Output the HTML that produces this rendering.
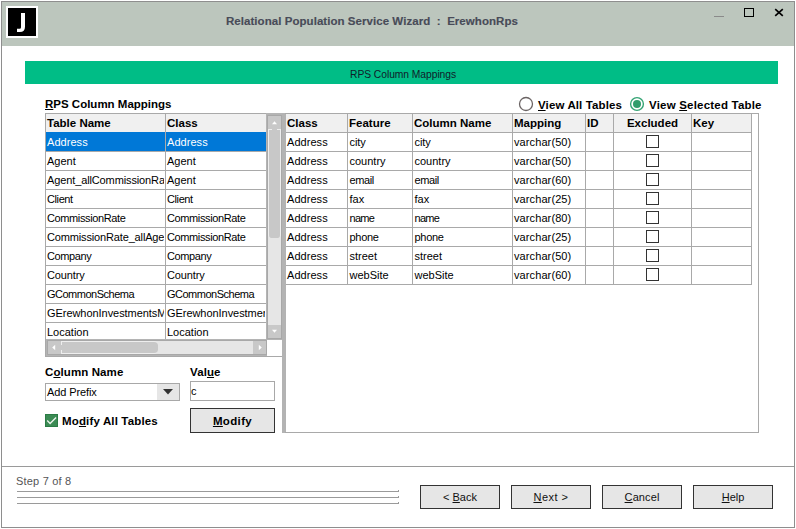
<!DOCTYPE html><html><head><meta charset="utf-8"><style>
*{margin:0;padding:0;box-sizing:border-box}
html,body{width:796px;height:529px;overflow:hidden;background:#fff}
body{position:relative;font-family:"Liberation Sans",sans-serif;font-size:11px;color:#000}
.a{position:absolute;white-space:nowrap}
.u{text-decoration:underline;text-underline-offset:1px}
.clip{position:absolute;overflow:hidden}
</style></head><body>
<div class="a" style="left:1px;top:1px;width:794px;height:527px;border:1px solid #8e8e8e"></div>
<div class="a" style="left:2px;top:2px;width:792px;height:44px;background:#bcc6bd"></div>
<div class="a" style="left:6px;top:6px;width:32px;height:32px;background:#fff"></div>
<div class="a" style="left:8px;top:8px;width:28px;height:28px;background:#000"></div>
<svg class="a" style="left:8px;top:8px" width="28" height="28" viewBox="8 8 28 28"><path d="M21 13H25V26.8Q25 32 19.8 32H17V28.8H19.6Q21 28.8 21 27.2Z" fill="#fff"/></svg>
<div class="a" style="left:226px;top:10.62px;line-height:20px;font-size:11.5px;letter-spacing:0.05px;font-weight:bold;color:#484b58;-webkit-text-stroke:0.15px #484b58">Relational Population Service Wizard&nbsp;&nbsp;:&nbsp;&nbsp;ErewhonRps</div>
<div class="a" style="left:714px;top:16px;width:10px;height:1px;background:#8a8a8a"></div>
<div class="a" style="left:744px;top:8px;width:10px;height:9px;border:1.5px solid #000"></div>
<svg class="a" style="left:774px;top:8px" width="10" height="9" viewBox="0 0 10 9"><path d="M1.2 1.2L8.8 7.8M8.8 1.2L1.2 7.8" stroke="#000" stroke-width="1.7"/></svg>
<div class="a" style="left:25px;top:61px;width:753px;height:23px;background:#00bd86"></div>
<div class="a" style="left:350px;top:64.83px;line-height:20px;font-size:10.3px;letter-spacing:-0.05px;font-weight:normal;color:#10202a;">RPS Column Mappings</div>
<div class="a" style="left:45px;top:93.52px;line-height:20px;font-size:11.5px;letter-spacing:0px;font-weight:bold;color:#000;"><span class="u">R</span>PS Column Mappings</div>
<svg class="a" style="left:518px;top:96px" width="16" height="16" viewBox="0 0 16 16"><circle cx="8" cy="8" r="6.5" fill="#fff" stroke="#6b6464" stroke-width="1.3"/></svg>
<div class="a" style="left:538px;top:95.02px;line-height:20px;font-size:11.5px;letter-spacing:0.12px;font-weight:bold;color:#000;"><span class="u">V</span>iew All Tables</div>
<svg class="a" style="left:629px;top:96px" width="16" height="16" viewBox="0 0 16 16"><circle cx="8" cy="8" r="6.4" fill="#fff" stroke="#34a474" stroke-width="1.4"/><circle cx="8" cy="8" r="4" fill="#2f9c6b"/></svg>
<div class="a" style="left:649px;top:95.02px;line-height:20px;font-size:11.5px;letter-spacing:0.2px;font-weight:bold;color:#000;">View <span class="u">S</span>elected Table</div>
<div class="a" style="left:45px;top:113px;width:237px;height:244px;border:1px solid #a9a9a9;border-right:none;background:#fff"></div>
<div class="a" style="left:46px;top:114px;width:220px;height:18px;background:#f0f0f0"></div>
<div class="a" style="left:46px;top:132px;width:220px;height:1px;background:#a9a9a9"></div>
<div class="a" style="left:165px;top:114px;width:1px;height:226px;background:#a9a9a9"></div>
<div class="a" style="left:47px;top:113.22px;line-height:20px;font-size:11.5px;letter-spacing:0px;font-weight:bold;color:#000;">Table Name</div>
<div class="a" style="left:167px;top:113.22px;line-height:20px;font-size:11.5px;letter-spacing:0px;font-weight:bold;color:#000;">Class</div>
<div class="a" style="left:46px;top:132px;width:220px;height:19px;background:#0078d7"></div>
<div class="clip" style="left:46px;top:133px;width:118px;height:18px">
<div class="a" style="left:1px;top:-0.91px;line-height:20px;font-size:11px;letter-spacing:0.05px;font-weight:normal;color:#fff;">Address</div>
</div>
<div class="clip" style="left:166px;top:133px;width:99px;height:18px">
<div class="a" style="left:1px;top:-0.91px;line-height:20px;font-size:11px;letter-spacing:0.05px;font-weight:normal;color:#fff;">Address</div>
</div>
<div class="a" style="left:46px;top:151px;width:220px;height:1px;background:#a9a9a9"></div>
<div class="clip" style="left:46px;top:152px;width:118px;height:18px">
<div class="a" style="left:1px;top:-0.91px;line-height:20px;font-size:11px;letter-spacing:0.0px;font-weight:normal;color:#000;">Agent</div>
</div>
<div class="clip" style="left:166px;top:152px;width:99px;height:18px">
<div class="a" style="left:1px;top:-0.91px;line-height:20px;font-size:11px;letter-spacing:0.0px;font-weight:normal;color:#000;">Agent</div>
</div>
<div class="a" style="left:46px;top:170px;width:220px;height:1px;background:#a9a9a9"></div>
<div class="clip" style="left:46px;top:171px;width:118px;height:18px">
<div class="a" style="left:1px;top:-0.91px;line-height:20px;font-size:11px;letter-spacing:-0.12px;font-weight:normal;color:#000;">Agent_allCommissionRates</div>
</div>
<div class="clip" style="left:166px;top:171px;width:99px;height:18px">
<div class="a" style="left:1px;top:-0.91px;line-height:20px;font-size:11px;letter-spacing:0.0px;font-weight:normal;color:#000;">Agent</div>
</div>
<div class="a" style="left:46px;top:189px;width:220px;height:1px;background:#a9a9a9"></div>
<div class="clip" style="left:46px;top:190px;width:118px;height:18px">
<div class="a" style="left:1px;top:-0.91px;line-height:20px;font-size:11px;letter-spacing:-0.4px;font-weight:normal;color:#000;">Client</div>
</div>
<div class="clip" style="left:166px;top:190px;width:99px;height:18px">
<div class="a" style="left:1px;top:-0.91px;line-height:20px;font-size:11px;letter-spacing:-0.4px;font-weight:normal;color:#000;">Client</div>
</div>
<div class="a" style="left:46px;top:208px;width:220px;height:1px;background:#a9a9a9"></div>
<div class="clip" style="left:46px;top:209px;width:118px;height:18px">
<div class="a" style="left:1px;top:-0.91px;line-height:20px;font-size:11px;letter-spacing:-0.38px;font-weight:normal;color:#000;">CommissionRate</div>
</div>
<div class="clip" style="left:166px;top:209px;width:99px;height:18px">
<div class="a" style="left:1px;top:-0.91px;line-height:20px;font-size:11px;letter-spacing:-0.38px;font-weight:normal;color:#000;">CommissionRate</div>
</div>
<div class="a" style="left:46px;top:227px;width:220px;height:1px;background:#a9a9a9"></div>
<div class="clip" style="left:46px;top:228px;width:118px;height:18px">
<div class="a" style="left:1px;top:-0.91px;line-height:20px;font-size:11px;letter-spacing:-0.15px;font-weight:normal;color:#000;">CommissionRate_allAgents</div>
</div>
<div class="clip" style="left:166px;top:228px;width:99px;height:18px">
<div class="a" style="left:1px;top:-0.91px;line-height:20px;font-size:11px;letter-spacing:-0.38px;font-weight:normal;color:#000;">CommissionRate</div>
</div>
<div class="a" style="left:46px;top:246px;width:220px;height:1px;background:#a9a9a9"></div>
<div class="clip" style="left:46px;top:247px;width:118px;height:18px">
<div class="a" style="left:1px;top:-0.91px;line-height:20px;font-size:11px;letter-spacing:-0.38px;font-weight:normal;color:#000;">Company</div>
</div>
<div class="clip" style="left:166px;top:247px;width:99px;height:18px">
<div class="a" style="left:1px;top:-0.91px;line-height:20px;font-size:11px;letter-spacing:-0.38px;font-weight:normal;color:#000;">Company</div>
</div>
<div class="a" style="left:46px;top:265px;width:220px;height:1px;background:#a9a9a9"></div>
<div class="clip" style="left:46px;top:266px;width:118px;height:18px">
<div class="a" style="left:1px;top:-0.91px;line-height:20px;font-size:11px;letter-spacing:-0.12px;font-weight:normal;color:#000;">Country</div>
</div>
<div class="clip" style="left:166px;top:266px;width:99px;height:18px">
<div class="a" style="left:1px;top:-0.91px;line-height:20px;font-size:11px;letter-spacing:-0.12px;font-weight:normal;color:#000;">Country</div>
</div>
<div class="a" style="left:46px;top:284px;width:220px;height:1px;background:#a9a9a9"></div>
<div class="clip" style="left:46px;top:285px;width:118px;height:18px">
<div class="a" style="left:1px;top:-0.91px;line-height:20px;font-size:11px;letter-spacing:-0.5px;font-weight:normal;color:#000;">GCommonSchema</div>
</div>
<div class="clip" style="left:166px;top:285px;width:99px;height:18px">
<div class="a" style="left:1px;top:-0.91px;line-height:20px;font-size:11px;letter-spacing:-0.5px;font-weight:normal;color:#000;">GCommonSchema</div>
</div>
<div class="a" style="left:46px;top:303px;width:220px;height:1px;background:#a9a9a9"></div>
<div class="clip" style="left:46px;top:304px;width:118px;height:18px">
<div class="a" style="left:1px;top:-0.91px;line-height:20px;font-size:11px;letter-spacing:-0.05px;font-weight:normal;color:#000;">GErewhonInvestmentsModel</div>
</div>
<div class="clip" style="left:166px;top:304px;width:99px;height:18px">
<div class="a" style="left:1px;top:-0.91px;line-height:20px;font-size:11px;letter-spacing:-0.05px;font-weight:normal;color:#000;">GErewhonInvestmentsModel</div>
</div>
<div class="a" style="left:46px;top:322px;width:220px;height:1px;background:#a9a9a9"></div>
<div class="clip" style="left:46px;top:323px;width:118px;height:16px">
<div class="a" style="left:1px;top:-0.91px;line-height:20px;font-size:11px;letter-spacing:0.0px;font-weight:normal;color:#000;">Location</div>
</div>
<div class="clip" style="left:166px;top:323px;width:99px;height:16px">
<div class="a" style="left:1px;top:-0.91px;line-height:20px;font-size:11px;letter-spacing:0.0px;font-weight:normal;color:#000;">Location</div>
</div>
<div class="a" style="left:165px;top:132px;width:1px;height:19px;background:#a9a9a9"></div>
<div class="a" style="left:266px;top:113px;width:16px;height:227px;background:#b4b4b4"></div>
<div class="a" style="left:267px;top:115px;width:15px;height:224px;background:#e6e6e6;border:1px solid #a8a8a8"></div>
<div class="a" style="left:268px;top:116px;width:13px;height:13px;background:#c8c8c8"></div>
<div class="a" style="left:268px;top:325px;width:13px;height:13px;background:#c8c8c8"></div>
<div class="a" style="left:268px;top:129px;width:13px;height:109px;background:#c8c8c8;border-left:1px solid #eeeeee;border-right:1px solid #eeeeee;border-radius:0 0 3px 3px"></div>
<div class="a" style="left:268px;top:129px;width:4px;height:1px;background:#eeeeee"></div>
<div class="a" style="left:277px;top:129px;width:4px;height:1px;background:#eeeeee"></div>
<svg class="a" style="left:271px;top:120px" width="7" height="5"><path d="M1 4.2L3.5 1.2L6 4.2Z" fill="#fff"/></svg>
<svg class="a" style="left:271px;top:329px" width="7" height="5"><path d="M1 0.8L3.5 3.8L6 0.8Z" fill="#fff"/></svg>
<div class="a" style="left:46px;top:339px;width:221px;height:17px;background:#b4b4b4"></div>
<div class="a" style="left:47px;top:340px;width:220px;height:15px;background:#e6e6e6;border:1px solid #a8a8a8"></div>
<div class="a" style="left:48px;top:341px;width:13px;height:13px;background:#c8c8c8"></div>
<div class="a" style="left:253px;top:341px;width:13px;height:13px;background:#c8c8c8"></div>
<div class="a" style="left:61px;top:341px;width:97px;height:13px;background:#c8c8c8;border-top:1px solid #eeeeee;border-bottom:1px solid #eeeeee;border-radius:0 4px 4px 0"></div>
<div class="a" style="left:61px;top:341px;width:1px;height:4px;background:#eeeeee"></div>
<div class="a" style="left:61px;top:350px;width:1px;height:4px;background:#eeeeee"></div>
<svg class="a" style="left:51px;top:344px" width="5" height="7"><path d="M4.2 0.8L1.2 3.5L4.2 6.2Z" fill="#fff"/></svg>
<svg class="a" style="left:258px;top:344px" width="5" height="7"><path d="M0.8 0.8L3.8 3.5L0.8 6.2Z" fill="#fff"/></svg>
<div class="a" style="left:267px;top:340px;width:15px;height:16px;background:#fff"></div>
<div class="a" style="left:45px;top:356px;width:238px;height:1px;background:#a9a9a9"></div>
<div class="a" style="left:282px;top:113px;width:4px;height:320px;background:#b3b3b3"></div>
<div class="a" style="left:285px;top:113px;width:474px;height:320px;border:1px solid #a9a9a9;border-left:none"></div>
<div class="a" style="left:286px;top:114px;width:465px;height:18px;background:#f0f0f0"></div>
<div class="a" style="left:347px;top:113px;width:1px;height:172px;background:#a9a9a9"></div>
<div class="a" style="left:412px;top:113px;width:1px;height:172px;background:#a9a9a9"></div>
<div class="a" style="left:512px;top:113px;width:1px;height:172px;background:#a9a9a9"></div>
<div class="a" style="left:585px;top:113px;width:1px;height:172px;background:#a9a9a9"></div>
<div class="a" style="left:613px;top:113px;width:1px;height:172px;background:#a9a9a9"></div>
<div class="a" style="left:691px;top:113px;width:1px;height:172px;background:#a9a9a9"></div>
<div class="a" style="left:751px;top:113px;width:1px;height:172px;background:#a9a9a9"></div>
<div class="a" style="left:287px;top:113.22px;line-height:20px;font-size:11.5px;letter-spacing:0px;font-weight:bold;color:#000;">Class</div>
<div class="a" style="left:349px;top:113.22px;line-height:20px;font-size:11.5px;letter-spacing:0px;font-weight:bold;color:#000;">Feature</div>
<div class="a" style="left:414px;top:113.22px;line-height:20px;font-size:11.5px;letter-spacing:0px;font-weight:bold;color:#000;">Column Name</div>
<div class="a" style="left:514px;top:113.22px;line-height:20px;font-size:11.5px;letter-spacing:0px;font-weight:bold;color:#000;">Mapping</div>
<div class="a" style="left:587px;top:113.22px;line-height:20px;font-size:11.5px;letter-spacing:0px;font-weight:bold;color:#000;">ID</div>
<div class="a" style="left:614px;width:77px;text-align:center;top:113.22px;line-height:20px;font-size:11.5px;letter-spacing:0px;font-weight:bold;color:#000;">Excluded</div>
<div class="a" style="left:693px;top:113.22px;line-height:20px;font-size:11.5px;letter-spacing:0px;font-weight:bold;color:#000;">Key</div>
<div class="a" style="left:286px;top:113px;width:465px;height:1px;background:#a9a9a9"></div>
<div class="a" style="left:286px;top:132px;width:465px;height:1px;background:#a9a9a9"></div>
<div class="a" style="left:286px;top:151px;width:465px;height:1px;background:#a9a9a9"></div>
<div class="a" style="left:286px;top:170px;width:465px;height:1px;background:#a9a9a9"></div>
<div class="a" style="left:286px;top:189px;width:465px;height:1px;background:#a9a9a9"></div>
<div class="a" style="left:286px;top:208px;width:465px;height:1px;background:#a9a9a9"></div>
<div class="a" style="left:286px;top:227px;width:465px;height:1px;background:#a9a9a9"></div>
<div class="a" style="left:286px;top:246px;width:465px;height:1px;background:#a9a9a9"></div>
<div class="a" style="left:286px;top:265px;width:465px;height:1px;background:#a9a9a9"></div>
<div class="a" style="left:286px;top:284px;width:465px;height:1px;background:#a9a9a9"></div>
<div class="a" style="left:287px;top:131.99px;line-height:20px;font-size:11px;letter-spacing:0.05px;font-weight:normal;color:#000;">Address</div>
<div class="a" style="left:349.5px;top:131.99px;line-height:20px;font-size:11px;letter-spacing:-0.05px;font-weight:normal;color:#000;">city</div>
<div class="a" style="left:414.5px;top:131.99px;line-height:20px;font-size:11px;letter-spacing:-0.05px;font-weight:normal;color:#000;">city</div>
<div class="a" style="left:514px;top:131.99px;line-height:20px;font-size:11px;letter-spacing:0.1px;font-weight:normal;color:#000;">varchar(50)</div>
<div class="a" style="left:646px;top:135px;width:13px;height:13px;border:1px solid #333;background:#fff"></div>
<div class="a" style="left:287px;top:150.99px;line-height:20px;font-size:11px;letter-spacing:0.05px;font-weight:normal;color:#000;">Address</div>
<div class="a" style="left:349.5px;top:150.99px;line-height:20px;font-size:11px;letter-spacing:0.0px;font-weight:normal;color:#000;">country</div>
<div class="a" style="left:414.5px;top:150.99px;line-height:20px;font-size:11px;letter-spacing:0.0px;font-weight:normal;color:#000;">country</div>
<div class="a" style="left:514px;top:150.99px;line-height:20px;font-size:11px;letter-spacing:0.1px;font-weight:normal;color:#000;">varchar(50)</div>
<div class="a" style="left:646px;top:154px;width:13px;height:13px;border:1px solid #333;background:#fff"></div>
<div class="a" style="left:287px;top:169.99px;line-height:20px;font-size:11px;letter-spacing:0.05px;font-weight:normal;color:#000;">Address</div>
<div class="a" style="left:349.5px;top:169.99px;line-height:20px;font-size:11px;letter-spacing:-0.4px;font-weight:normal;color:#000;">email</div>
<div class="a" style="left:414.5px;top:169.99px;line-height:20px;font-size:11px;letter-spacing:-0.4px;font-weight:normal;color:#000;">email</div>
<div class="a" style="left:514px;top:169.99px;line-height:20px;font-size:11px;letter-spacing:0.1px;font-weight:normal;color:#000;">varchar(60)</div>
<div class="a" style="left:646px;top:173px;width:13px;height:13px;border:1px solid #333;background:#fff"></div>
<div class="a" style="left:287px;top:188.99px;line-height:20px;font-size:11px;letter-spacing:0.05px;font-weight:normal;color:#000;">Address</div>
<div class="a" style="left:349.5px;top:188.99px;line-height:20px;font-size:11px;letter-spacing:0.0px;font-weight:normal;color:#000;">fax</div>
<div class="a" style="left:414.5px;top:188.99px;line-height:20px;font-size:11px;letter-spacing:0.0px;font-weight:normal;color:#000;">fax</div>
<div class="a" style="left:514px;top:188.99px;line-height:20px;font-size:11px;letter-spacing:0.1px;font-weight:normal;color:#000;">varchar(25)</div>
<div class="a" style="left:646px;top:192px;width:13px;height:13px;border:1px solid #333;background:#fff"></div>
<div class="a" style="left:287px;top:207.99px;line-height:20px;font-size:11px;letter-spacing:0.05px;font-weight:normal;color:#000;">Address</div>
<div class="a" style="left:349.5px;top:207.99px;line-height:20px;font-size:11px;letter-spacing:-0.7px;font-weight:normal;color:#000;">name</div>
<div class="a" style="left:414.5px;top:207.99px;line-height:20px;font-size:11px;letter-spacing:-0.7px;font-weight:normal;color:#000;">name</div>
<div class="a" style="left:514px;top:207.99px;line-height:20px;font-size:11px;letter-spacing:0.1px;font-weight:normal;color:#000;">varchar(80)</div>
<div class="a" style="left:646px;top:211px;width:13px;height:13px;border:1px solid #333;background:#fff"></div>
<div class="a" style="left:287px;top:226.99px;line-height:20px;font-size:11px;letter-spacing:0.05px;font-weight:normal;color:#000;">Address</div>
<div class="a" style="left:349.5px;top:226.99px;line-height:20px;font-size:11px;letter-spacing:-0.3px;font-weight:normal;color:#000;">phone</div>
<div class="a" style="left:414.5px;top:226.99px;line-height:20px;font-size:11px;letter-spacing:-0.3px;font-weight:normal;color:#000;">phone</div>
<div class="a" style="left:514px;top:226.99px;line-height:20px;font-size:11px;letter-spacing:0.1px;font-weight:normal;color:#000;">varchar(25)</div>
<div class="a" style="left:646px;top:230px;width:13px;height:13px;border:1px solid #333;background:#fff"></div>
<div class="a" style="left:287px;top:245.99px;line-height:20px;font-size:11px;letter-spacing:0.05px;font-weight:normal;color:#000;">Address</div>
<div class="a" style="left:349.5px;top:245.99px;line-height:20px;font-size:11px;letter-spacing:0.0px;font-weight:normal;color:#000;">street</div>
<div class="a" style="left:414.5px;top:245.99px;line-height:20px;font-size:11px;letter-spacing:0.0px;font-weight:normal;color:#000;">street</div>
<div class="a" style="left:514px;top:245.99px;line-height:20px;font-size:11px;letter-spacing:0.1px;font-weight:normal;color:#000;">varchar(50)</div>
<div class="a" style="left:646px;top:249px;width:13px;height:13px;border:1px solid #333;background:#fff"></div>
<div class="a" style="left:287px;top:264.99px;line-height:20px;font-size:11px;letter-spacing:0.05px;font-weight:normal;color:#000;">Address</div>
<div class="a" style="left:349.5px;top:264.99px;line-height:20px;font-size:11px;letter-spacing:0.0px;font-weight:normal;color:#000;">webSite</div>
<div class="a" style="left:414.5px;top:264.99px;line-height:20px;font-size:11px;letter-spacing:0.0px;font-weight:normal;color:#000;">webSite</div>
<div class="a" style="left:514px;top:264.99px;line-height:20px;font-size:11px;letter-spacing:0.1px;font-weight:normal;color:#000;">varchar(60)</div>
<div class="a" style="left:646px;top:268px;width:13px;height:13px;border:1px solid #333;background:#fff"></div>
<div class="a" style="left:45px;top:362.02px;line-height:20px;font-size:11.5px;letter-spacing:0.1px;font-weight:bold;color:#000;">C<span class="u">o</span>lumn Name</div>
<div class="a" style="left:190px;top:362.02px;line-height:20px;font-size:11.5px;letter-spacing:0.1px;font-weight:bold;color:#000;">Val<span class="u">u</span>e</div>
<div class="a" style="left:45px;top:383px;width:135px;height:18px;border:1px solid #a8a8a8;background:#fff"></div>
<div class="a" style="left:157px;top:384px;width:22px;height:16px;background:#e6e6e6"></div>
<svg class="a" style="left:163px;top:389px" width="10" height="6"><path d="M0 0H10L5 5.6Z" fill="#333"/></svg>
<div class="a" style="left:47px;top:381.99px;line-height:20px;font-size:11px;letter-spacing:-0.1px;font-weight:normal;color:#000;">Add Prefix</div>
<div class="a" style="left:190px;top:381px;width:85px;height:20px;border:1px solid #a8a8a8;background:#fff"></div>
<div class="a" style="left:191px;top:381.39px;line-height:20px;font-size:11px;letter-spacing:0px;font-weight:normal;color:#000;">c</div>
<div class="a" style="left:45px;top:414px;width:13px;height:13px;background:#3b8b54;border:1px solid #2b7c45"></div>
<svg class="a" style="left:45px;top:414px" width="13" height="13"><path d="M2.2 6.6L5.1 9.4L11.1 3.5" fill="none" stroke="#eef5ee" stroke-width="1.4"/></svg>
<div class="a" style="left:62px;top:411.02px;line-height:20px;font-size:11.5px;letter-spacing:0.15px;font-weight:bold;color:#000;">Mo<span class="u">d</span>ify All Tables</div>
<div class="a" style="left:190px;top:408px;width:85px;height:25px;border:1px solid #333;background:#e6e6e6"></div>
<div class="a" style="left:190px;width:85px;text-align:center;top:411.02px;line-height:20px;font-size:11.5px;letter-spacing:0.35px;font-weight:bold;color:#000;"><span class="u">M</span>odify</div>
<div class="a" style="left:2px;top:466px;width:792px;height:1px;background:#9a9a9a"></div>
<div class="a" style="left:16px;top:470.99px;line-height:20px;font-size:11px;letter-spacing:0.2px;font-weight:normal;color:#555;">Step 7 of 8</div>
<div class="a" style="left:17px;top:491px;width:382px;height:1px;background:#9a9a9a"></div>
<div class="a" style="left:398px;top:490px;width:1px;height:1px;background:#9a9a9a"></div>
<div class="a" style="left:17px;top:497px;width:382px;height:1px;background:#9a9a9a"></div>
<div class="a" style="left:398px;top:496px;width:1px;height:1px;background:#9a9a9a"></div>
<div class="a" style="left:17px;top:503px;width:382px;height:1px;background:#9a9a9a"></div>
<div class="a" style="left:398px;top:502px;width:1px;height:1px;background:#9a9a9a"></div>
<div class="a" style="left:420px;top:485px;width:80px;height:24px;border:1px solid #333;background:#e6e6e6"></div>
<div class="a" style="left:420px;width:80px;text-align:center;top:487.19px;line-height:20px;font-size:11px;letter-spacing:0px;font-weight:normal;color:#111;">&lt; <span class="u">B</span>ack</div>
<div class="a" style="left:511px;top:485px;width:80px;height:24px;border:1px solid #333;background:#e6e6e6"></div>
<div class="a" style="left:511px;width:80px;text-align:center;top:487.19px;line-height:20px;font-size:11px;letter-spacing:0.5px;font-weight:normal;color:#111;"><span class="u">N</span>ext &gt;</div>
<div class="a" style="left:602px;top:485px;width:80px;height:24px;border:1px solid #333;background:#e6e6e6"></div>
<div class="a" style="left:602px;width:80px;text-align:center;top:487.19px;line-height:20px;font-size:11px;letter-spacing:0.1px;font-weight:normal;color:#111;"><span class="u">C</span>ancel</div>
<div class="a" style="left:693px;top:485px;width:80px;height:24px;border:1px solid #333;background:#e6e6e6"></div>
<div class="a" style="left:693px;width:80px;text-align:center;top:487.19px;line-height:20px;font-size:11px;letter-spacing:0px;font-weight:normal;color:#111;"><span class="u">H</span>elp</div>
</body></html>
